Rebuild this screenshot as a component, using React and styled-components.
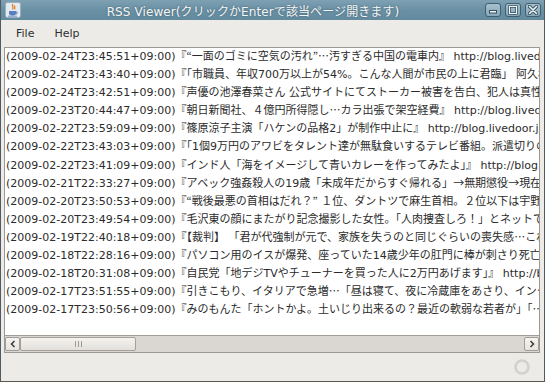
import React from 'react';
import styled, { createGlobalStyle } from 'styled-components';

const GlobalStyle = createGlobalStyle`
    html, body {
        margin: 0;
        padding: 0;
        background: #edebe7;
    }
    body {
        font-family: "DejaVu Sans", "Noto Sans CJK JP", sans-serif;
    }
`;

const Frame = styled.div`
    width: 545px;
    height: 382px;
    box-sizing: border-box;
    display: flex;
    flex-direction: column;
    background: #edebe7;
    border: 1px solid #4e5b63;
    border-top: none;
    border-bottom-color: #5a5650;
    overflow: hidden;
`;

const TitleBar = styled.div`
    height: 20px;
    flex: none;
    display: flex;
    align-items: center;
    padding: 0 3px 0 4px;
    background: linear-gradient(#7ea0b3, #6a90a4 50%, #628a9f);
    color: #f4f6f7;
    font-size: 12px;
    letter-spacing: 0.1px;
`;

const Title = styled.div`
    flex: 1;
    text-align: center;
    text-shadow: 0 0 2px rgba(40, 60, 70, 0.6);
    white-space: nowrap;
`;

const WinButtons = styled.div`
    display: flex;
    gap: 4px;
`;

const WinButton = styled.div`
    width: 16px;
    height: 14px;
    box-sizing: border-box;
    border: 1px solid #3f5e6e;
    border-radius: 3px;
    background: linear-gradient(#a7c0ce, #86a7b9);
    display: flex;
    align-items: center;
    justify-content: center;
`;

const MenuBar = styled.div`
    height: 27px;
    flex: none;
    display: flex;
    align-items: center;
    gap: 20px;
    padding: 0 0 0 15px;
    font-size: 11px;
    color: #2f2f2f;
`;

const ListPane = styled.div`
    height: 304px;
    flex: none;
    margin: 0 4px 0 3px;
    border: 1px solid #9d9891;
    display: flex;
    flex-direction: column;
`;

const Viewport = styled.div`
    flex: 1;
    background: #ffffff;
    overflow: hidden;
    padding: 0 0 0 1px;
`;

const Row = styled.div`
    height: 18.1px;
    line-height: 18px;
    font-size: 11px;
    color: #2b2b2b;
    white-space: nowrap;
    overflow: hidden;
`;

// full-width punctuation drawn from the Japanese face, as in the original
const Wide = styled.span`
    font-family: "Noto Sans CJK JP", sans-serif;
    line-height: 0;
`;

const HScroll = styled.div`
    height: 17px;
    flex: none;
    box-sizing: border-box;
    display: flex;
    align-items: stretch;
    background: #dad7d2;
    border-top: 1px solid #a29e97;
    padding: 1px 0;
`;

const ArrowButton = styled.div`
    width: 15px;
    box-sizing: border-box;
    border: 1px solid #a19d96;
    border-radius: 2px;
    background: linear-gradient(#f5f4f2, #e6e3df);
    display: flex;
    align-items: center;
    justify-content: center;
    margin-left: ${(p) => (p.$right ? 'auto' : '0')};
`;

const Thumb = styled.div`
    width: 116px;
    box-sizing: border-box;
    border: 1px solid #a5a19a;
    border-radius: 2px;
    background: linear-gradient(#f3f2ef, #e3e0dc);
    display: flex;
    align-items: center;
    justify-content: center;
    gap: 2px;
`;

const Grip = styled.span`
    width: 1px;
    height: 6px;
    background: #9c988f;
`;

const StatusArea = styled.div`
    flex: 1;
    display: flex;
    align-items: center;
    justify-content: flex-end;
    padding-right: 13px;
`;

const rows = [
    ['2009-02-24T23:45:51+09:00', '『“一面のゴミに空気の汚れ”…汚すぎる中国の電車内』 http://blog.livedoor.jp/dqnplus/archives/1236092.html'],
    ['2009-02-24T23:43:40+09:00', '『「市職員、年収700万以上が54%。こんな人間が市民の上に君臨」 阿久根市長のブログ』 http://blog.livedoor.jp/'],
    ['2009-02-24T23:42:51+09:00', '『声優の池澤春菜さん 公式サイトにてストーカー被害を告白、犯人は真性の…』 http://blog.livedoor.jp/'],
    ['2009-02-23T20:44:47+09:00', '『朝日新聞社、４億円所得隠し…カラ出張で架空経費』 http://blog.livedoor.jp/dqnplus/archives/1235812.html'],
    ['2009-02-22T23:59:09+09:00', '『篠原涼子主演「ハケンの品格2」が制作中止に』 http://blog.livedoor.jp/dqnplus/archives/1235640.html'],
    ['2009-02-22T23:43:03+09:00', '『「1個9万円のアワビをタレント達が無駄食いするテレビ番組。派遣切りの…』 http://blog.livedoor.jp/'],
    ['2009-02-22T23:41:09+09:00', '『インド人「海をイメージして青いカレーを作ってみたよ」』 http://blog.livedoor.jp/dqnplus/'],
    ['2009-02-21T22:33:27+09:00', '『アベック強姦殺人の19歳「未成年だからすぐ帰れる」→無期懲役→現在は…』 http://blog.livedoor.jp/'],
    ['2009-02-20T23:50:53+09:00', '『“戦後最悪の首相はだれ？” １位、ダントツで麻生首相。２位以下は宇野…』 http://blog.livedoor.jp/'],
    ['2009-02-20T23:49:54+09:00', '『毛沢東の顔にまたがり記念撮影した女性。「人肉捜査しろ！」とネットで…』 http://blog.livedoor.jp/'],
    ['2009-02-19T22:40:18+09:00', '『【裁判】 「君が代強制が元で、家族を失うのと同じぐらいの喪失感…これは…』 http://blog.livedoor.jp/'],
    ['2009-02-18T22:28:16+09:00', '『パソコン用のイスが爆発、座っていた14歳少年の肛門に棒が刺さり死亡』 http://blog.livedoor.jp/'],
    ['2009-02-18T20:31:08+09:00', '『自民党「地デジTVやチューナーを買った人に2万円あげます」』 http://blog.livedoor.jp/dqnplus/'],
    ['2009-02-17T23:51:55+09:00', '『引きこもり、イタリアで急増…「昼は寝て、夜に冷蔵庫をあさり、インターネット」』 http://blog.livedoor.jp/'],
    ['2009-02-17T23:50:56+09:00', '『みのもんた「ホントかよ。土いじり出来るの？最近の軟弱な若者が」「…』 http://blog.livedoor.jp/'],
];

const renderText = (text) =>
    text.split(/([…“”→])/).map((part, i) =>
        i % 2 === 1 ? <Wide key={i}>{part}</Wide> : part
    );

const JavaIcon = () => (
    <svg width="16" height="16" viewBox="0 0 16 16">
        <rect x="0.5" y="0.5" width="15" height="15" rx="2" fill="#e4ebef" stroke="#9bb0bc" />
        <path d="M8 2 C6 4 9.5 5 7.5 7.5 M9.8 3.5 C8.8 5 10.6 5.6 9.5 7.3" stroke="#e2761b" strokeWidth="1.2" fill="none" />
        <path d="M4 9 H11 V11.5 C11 13 9.5 13.6 7.5 13.6 C5.5 13.6 4 13 4 11.5 Z" fill="#5a7fc0" />
        <path d="M11 9.8 C12.8 9.8 12.8 12 11 12" stroke="#5a7fc0" strokeWidth="1" fill="none" />
        <path d="M3 14.2 H12" stroke="#5a7fc0" strokeWidth="0.8" />
    </svg>
);

const MinIcon = () => (
    <svg width="10" height="8" viewBox="0 0 10 8">
        <rect x="1.5" y="4.5" width="7" height="2.5" fill="#f4f6f7" stroke="#34505e" strokeWidth="1" />
    </svg>
);

const MaxIcon = () => (
    <svg width="10" height="10" viewBox="0 0 10 10">
        <rect x="1.5" y="1.5" width="7" height="7" fill="none" stroke="#34505e" strokeWidth="2.4" />
        <rect x="1.5" y="1.5" width="7" height="7" fill="none" stroke="#f4f6f7" strokeWidth="1" />
    </svg>
);

const CloseIcon = () => (
    <svg width="10" height="10" viewBox="0 0 10 10">
        <path d="M1.5 1.5 L8.5 8.5 M8.5 1.5 L1.5 8.5" stroke="#34505e" strokeWidth="3.4" strokeLinecap="round" />
        <path d="M1.5 1.5 L8.5 8.5 M8.5 1.5 L1.5 8.5" stroke="#f4f6f7" strokeWidth="1.6" strokeLinecap="round" />
    </svg>
);

const Chevron = ({ dir }) => (
    <svg width="6" height="8" viewBox="0 0 6 8">
        <path
            d={dir === 'left' ? 'M4.5 1 L1.5 4 L4.5 7' : 'M1.5 1 L4.5 4 L1.5 7'}
            stroke="#3a3a3a"
            strokeWidth="1.5"
            fill="none"
        />
    </svg>
);

const App = () => {
    return (
        <>
            <GlobalStyle />
            <Frame>
                <TitleBar>
                    <JavaIcon />
                    <Title>RSS Viewer(クリックかEnterで該当ページ開きます)</Title>
                    <WinButtons>
                        <WinButton><MinIcon /></WinButton>
                        <WinButton><MaxIcon /></WinButton>
                        <WinButton><CloseIcon /></WinButton>
                    </WinButtons>
                </TitleBar>
                <MenuBar>
                    <span>File</span>
                    <span>Help</span>
                </MenuBar>
                <ListPane>
                    <Viewport>
                        {rows.map(([date, text]) => (
                            <Row key={date}>({date}){renderText(text)}</Row>
                        ))}
                    </Viewport>
                    <HScroll>
                        <ArrowButton><Chevron dir="left" /></ArrowButton>
                        <Thumb>
                            <Grip />
                            <Grip />
                            <Grip />
                        </Thumb>
                        <ArrowButton $right><Chevron dir="right" /></ArrowButton>
                    </HScroll>
                </ListPane>
                <StatusArea>
                    <svg width="18" height="18" viewBox="0 0 18 18">
                        <circle cx="9" cy="9" r="6.5" fill="none" stroke="#d3d1cd" strokeWidth="2.6" />
                    </svg>
                </StatusArea>
            </Frame>
        </>
    );
};

export default App;
